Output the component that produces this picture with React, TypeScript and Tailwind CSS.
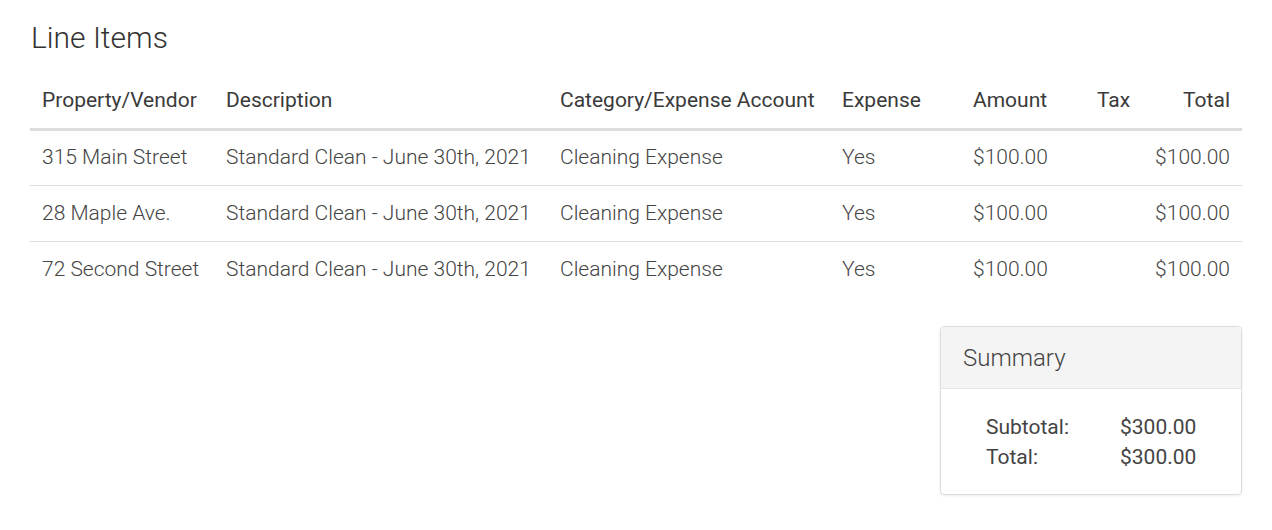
const rows = [
  { property: "315 Main Street", description: "Standard Clean - June 30th, 2021", category: "Cleaning Expense", expense: "Yes", amount: "$100.00", tax: "", total: "$100.00" },
  { property: "28 Maple Ave.", description: "Standard Clean - June 30th, 2021", category: "Cleaning Expense", expense: "Yes", amount: "$100.00", tax: "", total: "$100.00" },
  { property: "72 Second Street", description: "Standard Clean - June 30th, 2021", category: "Cleaning Expense", expense: "Yes", amount: "$100.00", tax: "", total: "$100.00" },
]

export default function App() {
  return (
    <div className="min-h-[530px] bg-white px-[30px] pt-[20px] font-['Roboto',sans-serif] text-[21px]">
      <h2 className="text-[30px] font-light leading-[36px] text-[#333] pl-px">Line Items</h2>

      <table className="mt-[17px] w-full border-collapse table-fixed">
        <colgroup>
          <col className="w-[184px]" />
          <col className="w-[334px]" />
          <col className="w-[282px]" />
          <col className="w-[131px]" />
          <col className="w-[124px]" />
          <col className="w-[55px]" />
          <col />
        </colgroup>
        <thead>
          <tr className="h-[56px] border-b-[3px] border-[#dddddd] text-[#3a3a3a]">
            <th className="px-3 text-left font-normal">Property/Vendor</th>
            <th className="px-3 text-left font-normal">Description</th>
            <th className="px-3 text-left font-normal">Category/Expense Account</th>
            <th className="px-3 text-left font-normal">Expense</th>
            <th className="px-3 text-left font-normal">Amount</th>
            <th className="px-3 text-left font-normal">Tax</th>
            <th className="px-3 text-right font-normal">Total</th>
          </tr>
        </thead>
        <tbody className="font-light text-[#444]">
          {rows.map((r, i) => (
            <tr key={i} className={i > 0 ? "h-[56px] border-t border-[#dddddd]" : "h-[56px]"}>
              <td className="px-3 pt-px whitespace-nowrap">{r.property}</td>
              <td className="px-3 pt-px whitespace-nowrap">{r.description}</td>
              <td className="px-3 pt-px whitespace-nowrap">{r.category}</td>
              <td className="px-3 pt-px">{r.expense}</td>
              <td className="px-3 pt-px">{r.amount}</td>
              <td className="px-3 pt-px">{r.tax}</td>
              <td className="px-3 pt-px text-right">{r.total}</td>
            </tr>
          ))}
        </tbody>
      </table>

      <div className="flex justify-end mt-[29px]">
        <div className="w-[302px] rounded border border-[#dddddd] shadow-[0_1px_3px_rgba(0,0,0,0.08)] overflow-hidden">
          <div className="h-[62px] bg-[#f4f4f4] border-b border-[#e6e6e6] flex items-center px-[22px]">
            <span className="text-[24px] font-light text-[#444]">Summary</span>
          </div>
          <div className="pl-[45px] pt-[23px] pb-[22px] text-[#444]">
            <div className="grid grid-cols-[134px_auto] leading-[30px]">
              <span>Subtotal:</span>
              <span>$300.00</span>
              <span>Total:</span>
              <span>$300.00</span>
            </div>
          </div>
        </div>
      </div>
    </div>
  )
}
